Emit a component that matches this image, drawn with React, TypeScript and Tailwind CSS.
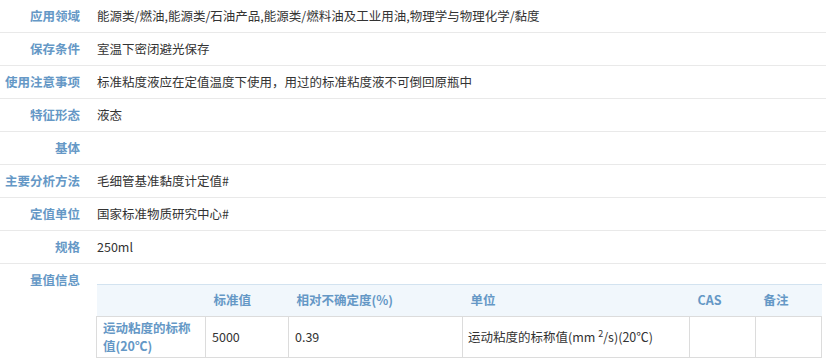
const rows: [string, string][] = [
  ["应用领域", "能源类/燃油,能源类/石油产品,能源类/燃料油及工业用油,物理学与物理化学/黏度"],
  ["保存条件", "室温下密闭避光保存"],
  ["使用注意事项", "标准粘度液应在定值温度下使用，用过的标准粘度液不可倒回原瓶中"],
  ["特征形态", "液态"],
  ["基体", ""],
  ["主要分析方法", "毛细管基准黏度计定值#"],
  ["定值单位", "国家标准物质研究中心#"],
  ["规格", "250ml"],
];

export default function App() {
  return (
    <div
      className="w-[826px] h-[361px] overflow-hidden bg-white text-[12.5px] text-[#333]"
      style={{ fontFamily: '"Noto Sans CJK SC", "Noto Sans", sans-serif' }}
    >
      {rows.map(([label, value]) => (
        <div key={label} className="grid grid-cols-[80px_1fr] h-[33px] items-center border-b border-[#e9e9e9]">
          <div className="text-right font-bold text-[#6598c6]">{label}</div>
          <div className="pl-[17px]">{value}</div>
        </div>
      ))}
      <div className="grid grid-cols-[80px_1fr]">
        <div className="text-right font-bold text-[#6598c6] pt-[7px]">量值信息</div>
        <div className="pl-[16px] pt-[20px]">
          <table className="w-[725px] table-fixed border-collapse">
            <colgroup>
              <col className="w-[109px]" />
              <col className="w-[83px]" />
              <col className="w-[174px]" />
              <col className="w-[227px]" />
              <col className="w-[66px]" />
              <col className="w-[66px]" />
            </colgroup>
            <thead>
              <tr className="h-[32px] bg-[#f1f7fc] border-t border-[#d3e3f0] font-bold text-[#6598c6] text-left">
                <th className="px-[8px]"></th>
                <th className="px-[8px]">标准值</th>
                <th className="px-[8px]">相对不确定度(%)</th>
                <th className="px-[8px]">单位</th>
                <th className="px-[8px]">CAS</th>
                <th className="px-[8px]">备注</th>
              </tr>
            </thead>
            <tbody>
              <tr className="h-[41px]">
                <td className="px-[6px] border border-[#dcdcdc] font-bold text-[#6598c6] leading-[18px]">
                  运动粘度的标称值(20℃)
                </td>
                <td className="px-[6px] border border-[#dcdcdc]">5000</td>
                <td className="px-[6px] border border-[#dcdcdc]">0.39</td>
                <td className="px-[5px] border border-[#dcdcdc]">
                  运动粘度的标称值(mm <sup className="text-[9px]">2</sup>/s)(20℃)
                </td>
                <td className="border border-[#dcdcdc]"></td>
                <td className="border border-[#dcdcdc]"></td>
              </tr>
            </tbody>
          </table>
        </div>
      </div>
    </div>
  );
}
